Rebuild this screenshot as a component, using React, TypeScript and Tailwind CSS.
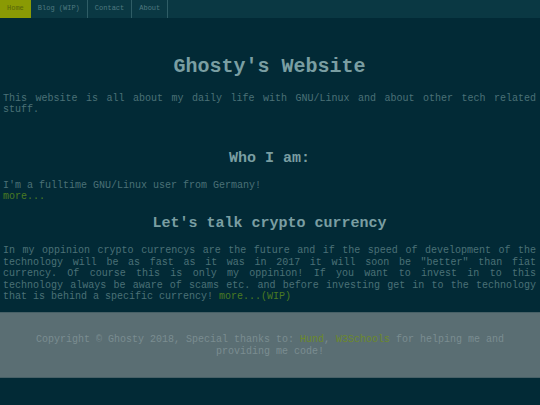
const mono = "font-['Courier_New','Nimbus_Mono_PS','Nimbus_Mono_L','FreeMono','Liberation_Mono',monospace]";

const navItems = ["Home", "Blog (WIP)", "Contact", "About"];

function Nav() {
  return (
    <nav className="flex h-[18px] bg-[#0a3843]">
      {navItems.map((item, i) =>
        i === 0 ? (
          <a key={item} className="flex items-center px-[7px] bg-[#8a9a04] text-[#56650a] text-[7px]">
            {item}
          </a>
        ) : (
          <a
            key={item}
            className="flex items-center px-[7px] border-r border-[#2f5d66] text-[#4f7880] text-[7px]"
          >
            {item}
          </a>
        )
      )}
    </nav>
  );
}

export default function App() {
  return (
    <div className={`${mono} min-h-[405px] bg-[#022a36] text-[#4b7177] text-[10px] leading-[11.4px]`}>
      <Nav />
      <main className="pl-[3px] pr-[4px]">
        <h1 className="mt-[38px] text-center text-[20px] leading-[22.7px] font-bold text-[#7a9ea2]">
          Ghosty's Website
        </h1>
        <p className="mt-[14px] text-justify">
          This website is all about my daily life with GNU/Linux and about other tech related stuff.
        </p>
        <h2 className="mt-[34px] text-center text-[15px] leading-[17px] font-bold text-[#7a9ea2]">
          Who I am:
        </h2>
        <p className="mt-[13px]">
          I'm a fulltime GNU/Linux user from Germany!
          <br />
          <a className="text-[#4a7a22]">more...</a>
        </p>
        <h2 className="mt-[13px] text-center text-[15px] leading-[17px] font-bold text-[#7a9ea2]">
          Let's talk crypto currency
        </h2>
        <p className="mt-[13px] text-justify">
          In my oppinion crypto currencys are the future and if the speed of development of the
          technology will be as fast as it was in 2017 it will soon be "better" than fiat currency.
          Of course this is only my oppinion! If you want to invest in to this technology always be
          aware of scams etc. and before investing get in to the technology that is behind a
          specific currency! <a className="text-[#4a7a22]">more...(WIP)</a>
        </p>
      </main>
      <footer className="mt-[10px] h-[66px] border-t border-b border-[#476066] bg-[#5a6e73] px-[20px] pt-[21px] text-center text-[#7b8d91]">
        Copyright © Ghosty 2018, Special thanks to: <a className="text-[#6c8a2a]">Hund</a>,{" "}
        <a className="text-[#6c8a2a]">W3Schools</a> for helping me and providing me code!
      </footer>
    </div>
  );
}
